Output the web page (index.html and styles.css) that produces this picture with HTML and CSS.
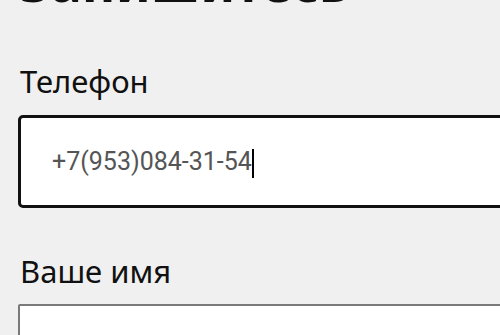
FILE: index.html
```html
<!DOCTYPE html>
<html lang="ru">
<head>
<meta charset="utf-8">
<link rel="stylesheet" href="styles.css">
</head>
<body>
<main class="form">
  <h1 class="title">Запишитесь</h1>
  <label class="label label-phone">Телефон</label>
  <div class="input input-active">
    <span class="value">+7(953)084-31-54</span><span class="caret"></span>
  </div>
  <label class="label label-name">Ваше имя</label>
  <div class="input input-plain"></div>
</main>
</body>
</html>
```
FILE: styles.css
```css
html, body {
  margin: 0;
  padding: 0;
  background: #f0f0f0;
  overflow: hidden;
}
.form {
  padding-left: 18px;
  font-family: "Noto Sans", "Open Sans", sans-serif;
  color: #111;
}
.title {
  margin: -44px 0 0 2px;
  font-size: 52px;
  line-height: 52px;
  font-weight: 700;
  white-space: nowrap;
}
.label {
  display: block;
  font-size: 31px;
  line-height: 36px;
  margin-left: 2px;
}
.label-phone {
  margin-top: 55px;
}
.label-name {
  margin-top: 45px;
}
.input {
  box-sizing: border-box;
  width: 520px;
  background: #fff;
  border-radius: 5px;
}
.input-active {
  margin-top: 16px;
  height: 93px;
  border: 3px solid #111;
  display: flex;
  align-items: center;
  padding-left: 31px;
  font-family: Roboto, "Liberation Sans", sans-serif;
  font-size: 25px;
  color: #555;
}
.value {
  line-height: 30px;
}
.caret {
  display: inline-block;
  width: 2px;
  height: 29px;
  margin-left: 0;
  margin-top: 4px;
  background: #000;
}
.input-plain {
  margin-top: 15px;
  height: 60px;
  border: 2px solid #7a7a7a;
  border-radius: 2px;
}
```
